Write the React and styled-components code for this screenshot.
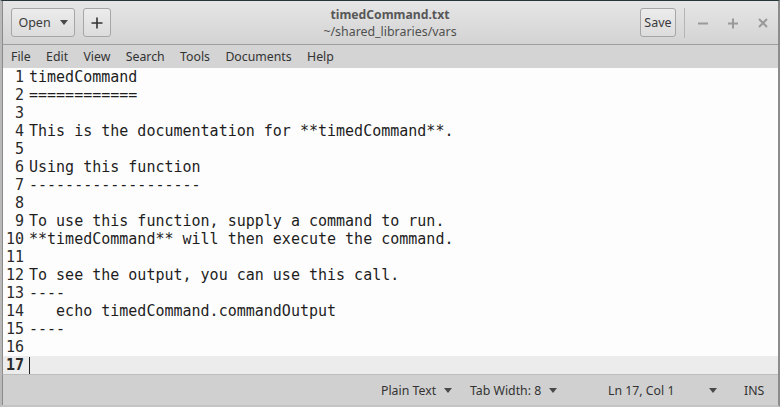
import React from 'react';
import styled, { createGlobalStyle } from 'styled-components';

const Global = createGlobalStyle`
  html, body { margin: 0; padding: 0; background: #d9d9d9; }
  body { font-family: "Noto Sans", "Open Sans", sans-serif; }
`;

const lines = [
  'timedCommand',
  '============',
  '',
  'This is the documentation for **timedCommand**.',
  '',
  'Using this function',
  '-------------------',
  '',
  'To use this function, supply a command to run.',
  '**timedCommand** will then execute the command.',
  '',
  'To see the output, you can use this call.',
  '----',
  '   echo timedCommand.commandOutput',
  '----',
  '',
  '',
];

const menus = ['File', 'Edit', 'View', 'Search', 'Tools', 'Documents', 'Help'];

function Caret() {
  return (
    <svg width="8" height="5" viewBox="0 0 8 5">
      <path d="M0 0 L8 0 L4 5 Z" fill="#4a4a4a" />
    </svg>
  );
}

export default function App() {
  return (
    <>
      <Global />
      <Window>
        <Header>
          <Group>
            <HeaderButton $w={64}>
              Open <Caret />
            </HeaderButton>
            <HeaderButton $w={28}>
              <svg width="12" height="12" viewBox="0 0 12 12">
                <path d="M6 0.5 V11.5 M0.5 6 H11.5" stroke="#333" strokeWidth="1.6" />
              </svg>
            </HeaderButton>
          </Group>
          <Title>
            <strong>timedCommand.txt</strong>
            <span>~/shared_libraries/vars</span>
          </Title>
          <Group $end>
            <HeaderButton $w={36}>Save</HeaderButton>
            <Separator />
            <Controls>
              <svg width="12" height="12" viewBox="0 0 12 12">
                <path d="M1 6.5 H11" stroke="#9a9a9a" strokeWidth="2" />
              </svg>
              <svg width="12" height="12" viewBox="0 0 12 12">
                <path d="M6 1.5 V11.5 M1 6.5 H11" stroke="#9a9a9a" strokeWidth="2" />
              </svg>
              <svg width="12" height="12" viewBox="0 0 12 12">
                <path d="M2 2 L10 10 M10 2 L2 10" stroke="#9a9a9a" strokeWidth="2" />
              </svg>
            </Controls>
          </Group>
        </Header>
        <MenuBar>
          {menus.map((m) => (
            <MenuItem key={m}>{m}</MenuItem>
          ))}
        </MenuBar>
        <Editor>
          {lines.map((text, i) => {
            const current = i === lines.length - 1;
            return (
              <Line key={i} $current={current}>
                <Num $current={current}>{i + 1}</Num>
                <Code>
                  {current && <Cursor />}
                  {text}
                </Code>
              </Line>
            );
          })}
        </Editor>
        <StatusBar>
          <Status $w={89}>Plain Text <Caret /></Status>
          <Status $w={138}>Tab Width: 8 <Caret /></Status>
          <Status $w={101}>Ln 17, Col 1</Status>
          <Status $w={35}><Caret /></Status>
          <Status $w={24}>INS</Status>
        </StatusBar>
      </Window>
    </>
  );
}

const Window = styled.div`
  width: 780px;
  height: 407px;
  box-sizing: border-box;
  display: flex;
  flex-direction: column;
  border-top: 1px solid #26353a;
  border-left: 2px solid #b9b9b9;
  border-right: 2px solid #8c8c8c;
  border-bottom: 2px solid #c4c4c4;
  overflow: hidden;
`;

const Header = styled.div`
  height: 43px;
  flex: none;
  display: grid;
  grid-template-columns: 1fr auto 1fr;
  align-items: center;
  padding: 0 9px 0 8px;
  background: linear-gradient(#e6e6e6, #d3d3d3);
  border-bottom: 1px solid #9e9e9e;
  border-left: 1px solid #8a8a8a;
`;

const Group = styled.div`
  display: flex;
  align-items: center;
  gap: 8px;
  justify-content: ${(p) => (p.$end ? 'flex-end' : 'flex-start')};
`;

const HeaderButton = styled.div`
  width: ${(p) => p.$w}px;
  height: 29px;
  box-sizing: border-box;
  display: flex;
  align-items: center;
  justify-content: center;
  gap: 9px;
  border: 1px solid #a6a6a6;
  border-radius: 3px;
  background: linear-gradient(#ececec, #dcdcdc);
  font-size: 12.5px;
  color: #3a3a3a;
`;

const Title = styled.div`
  display: flex;
  flex-direction: column;
  align-items: center;
  line-height: 17px;
  font-size: 12.4px;
  color: #505050;
  strong { font-weight: 700; font-size: 12.2px; color: #575757; }
`;

const Separator = styled.div`
  width: 1px;
  height: 30px;
  background: #b5b5b5;
`;

const Controls = styled.div`
  display: flex;
  gap: 18px;
  padding-left: 4px;
`;

const MenuBar = styled.div`
  height: 23px;
  flex: none;
  display: flex;
  align-items: center;
  padding-left: 8px;
  background: #d4d4d4;
  border-left: 1px solid #8a8a8a;
`;

const MenuItem = styled.span`
  font-size: 12.3px;
  color: #333;
  margin-right: 15.4px;
`;

const Editor = styled.div`
  flex: 1;
  background: #fdfdfd;
  border-left: 1px solid #8a8a8a;
  font-family: "DejaVu Sans Mono", monospace;
  font-size: 15px;
  color: #1e1e1e;
`;

const Line = styled.div`
  height: 18px;
  line-height: 18px;
  display: flex;
  background: ${(p) => (p.$current ? '#ececec' : 'transparent')};
`;

const Num = styled.span`
  width: 21px;
  text-align: right;
  padding-right: 5px;
  font-weight: ${(p) => (p.$current ? 700 : 400)};
  color: #2a2a2a;
`;

const Code = styled.span`
  position: relative;
  white-space: pre;
`;

const Cursor = styled.span`
  position: absolute;
  left: 0;
  top: 1px;
  width: 1px;
  height: 17px;
  background: #222;
`;

const StatusBar = styled.div`
  height: 31px;
  flex: none;
  display: flex;
  align-items: center;
  justify-content: flex-end;
  padding-right: 10px;
  background: #d0d0d0;
  border-top: 1px solid #bdbdbd;
  border-left: 1px solid #8a8a8a;
  border-bottom: 1px solid #8a8a8a;
`;

const Status = styled.div`
  width: ${(p) => p.$w}px;
  display: flex;
  align-items: center;
  gap: 8px;
  font-size: 12.3px;
  color: #333;
`;
